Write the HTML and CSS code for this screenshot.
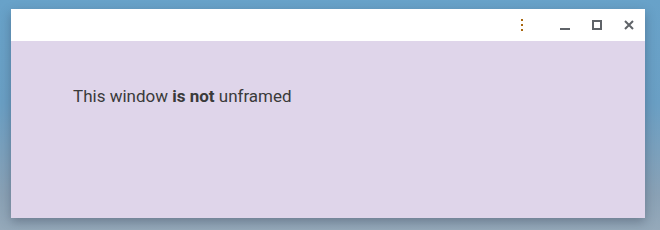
FILE: index.html
```html
<!DOCTYPE html>
<html>
<head>
<meta charset="utf-8">
<link rel="stylesheet" href="styles.css">
</head>
<body>
<div class="desktop">
  <div class="window">
    <div class="titlebar">
      <button class="btn menu" aria-label="Menu">
        <svg width="4" height="14" viewBox="0 0 4 14"><rect x="1" y="1" width="2" height="2"/><rect x="1" y="6" width="2" height="2"/><rect x="1" y="11" width="2" height="2"/></svg>
      </button>
      <button class="btn min" aria-label="Minimize">
        <svg width="12" height="12" viewBox="0 0 12 12"><rect x="1" y="9" width="10" height="2"/></svg>
      </button>
      <button class="btn max" aria-label="Maximize">
        <svg width="12" height="12" viewBox="0 0 12 12"><rect x="2" y="2" width="8" height="8" fill="none" stroke-width="2"/></svg>
      </button>
      <button class="btn close" aria-label="Close">
        <svg width="12" height="12" viewBox="0 0 12 12"><path d="M2 2 L10 10 M10 2 L2 10" fill="none" stroke-width="2"/></svg>
      </button>
    </div>
    <div class="content">
      <p class="msg">This window <b>is not</b> unframed</p>
    </div>
  </div>
</div>
</body>
</html>
```
FILE: styles.css
```css
html, body {
  margin: 0;
  padding: 0;
  width: 660px;
  height: 230px;
  overflow: hidden;
}
.desktop {
  width: 660px;
  height: 230px;
  box-sizing: border-box;
  padding: 9px 15px 12px 11px;
  background: linear-gradient(180deg, #68a2c9 0%, #6a9fc4 45%, #8aa1b5 85%, #95a9ba 100%);
}
.window {
  width: 634px;
  height: 209px;
  display: flex;
  flex-direction: column;
  box-shadow: 0 4px 10px rgba(40, 50, 70, 0.35);
}
.titlebar {
  height: 32px;
  background: #ffffff;
  display: flex;
  align-items: center;
  justify-content: flex-end;
  padding-right: 10px;
}
.btn {
  border: 0;
  background: none;
  padding: 0;
  margin: 0;
  display: flex;
  align-items: center;
  justify-content: center;
  height: 32px;
}
.menu {
  width: 4px;
  margin-right: 35px;
}
.menu svg { fill: #a8670f; }
.min { width: 12px; margin-right: 20px; }
.min svg { fill: #5f6368; }
.max { width: 12px; margin-right: 20px; }
.max svg rect { stroke: #5f6368; }
.close { width: 12px; }
.close svg path { stroke: #5f6368; }
.content {
  flex: 1;
  background: #dfd5ea;
  padding: 45px 0 0 62px;
}
.msg {
  margin: 0;
  font-family: Roboto, "Liberation Sans", sans-serif;
  font-size: 17px;
  line-height: 20px;
  color: #3a3a3a;
}
.msg b { font-weight: 700; }
```
